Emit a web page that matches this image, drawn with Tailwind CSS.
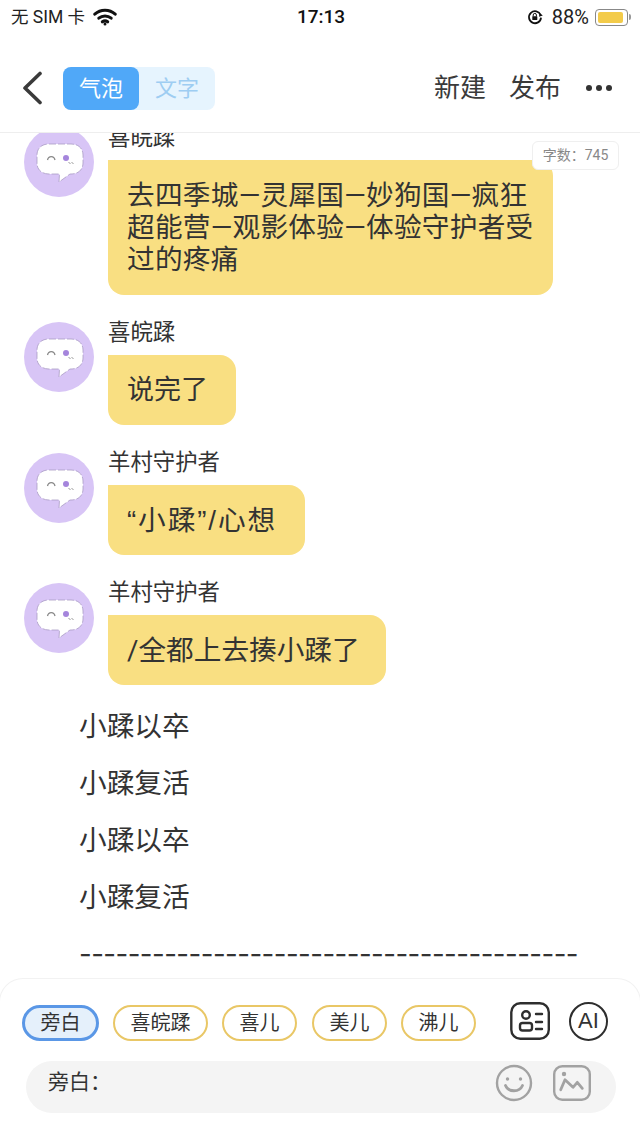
<!DOCTYPE html>
<html lang="zh">
<head>
  <meta charset="UTF-8" />
  <meta name="viewport" content="width=device-width, initial-scale=1.0" />
  <title>气泡</title>
  <script src="https://cdn.jsdelivr.net/npm/@tailwindcss/browser@4"></script>
</head>
<body class="bg-white text-[#333] font-['Roboto','Noto_Sans_CJK_SC',sans-serif]">
  <div class="relative w-[640px] h-[1138px] flex flex-col overflow-hidden">
    <!-- Status bar -->
    <div class="h-[44px] shrink-0 flex items-start justify-between pl-[11px] pr-[9px] pt-[4px] text-[#222]">
      <div class="flex items-center gap-[8px] w-[200px] h-[26px]">
        <span class="text-[17.500px] leading-[26px]">无 SIM 卡</span>
        <svg width="24" height="18" viewBox="0 0 24 18" fill="none" stroke="#111" stroke-width="3" stroke-linecap="round"><path d="M1.800 6.200C7.500 1 16.500 1 22.200 6.200"/><path d="M5.800 10.200C9.300 7.200 14.700 7.200 18.200 10.200"/><path d="M9.300 13.800c1.700-1.200 3.700-1.200 5.400 0"/><circle cx="12" cy="16" r="1.500" fill="#111" stroke="none"/></svg>
      </div>
      <div class="text-[19px] leading-[26px] font-medium text-[#111]">17:13</div>
      <div class="flex items-center justify-end gap-[9px] w-[200px] h-[26px]">
        <svg width="16" height="16" viewBox="0 0 16 16" fill="none"><path d="M13.600 6A6 6 0 1 0 14 8.600" stroke="#111" stroke-width="1.800"/><path d="M15.800 6.500 12 7.800 12.600 4z" fill="#111"/><rect x="5.300" y="7.200" width="5" height="3.800" rx=".6" fill="#111"/><path d="M6.200 7.500V6a1.600 1.600 0 0 1 3.200 0v1.500" stroke="#111" stroke-width="1"/></svg>
        <span class="text-[20px] leading-[26px] text-[#222]">88%</span>
        <div class="flex items-center gap-[1px] -ml-[3px]">
          <div class="w-[33px] h-[17px] rounded-[4px] border border-[#888] p-[2px]"><div class="w-[25px] h-full rounded-[2px] bg-[#f3cb4a]"></div></div>
          <div class="w-[2px] h-[6px] rounded-r-full bg-[#999]"></div>
        </div>
      </div>
    </div>

    <!-- Nav -->
    <header class="h-[89px] shrink-0 flex items-center border-b border-[#eeeeee] pl-[22px] pr-[28px]">
      <svg width="20" height="34" viewBox="0 0 20 34" fill="none" stroke="#3a3a3a" stroke-width="3.600" stroke-linecap="round" stroke-linejoin="round"><path d="M18 2.500 3 17l15 14.500"/></svg>
      <div class="ml-[21px] flex w-[152px] h-[43px] rounded-[8px] bg-[#e6f4fe] text-[22px] leading-[43px] text-center">
        <div class="w-[76px] rounded-[8px] bg-[#50a8f8] text-white">气泡</div>
        <div class="flex-1 text-[#9ecdf2]">文字</div>
      </div>
      <div class="ml-auto flex items-center text-[26px] text-[#3a3a3a]">
        <span>新建</span>
        <span class="ml-[23px]">发布</span>
        <div class="ml-[25px] flex gap-[4px]">
          <i class="block size-[6px] rounded-full bg-[#333]"></i>
          <i class="block size-[6px] rounded-full bg-[#333]"></i>
          <i class="block size-[6px] rounded-full bg-[#333]"></i>
        </div>
      </div>
    </header>

    <!-- Word count -->
    <div class="absolute top-[141px] left-[532px] w-[87px] h-[29px] z-10 bg-white border border-[#efefef] rounded-[6px] text-[14px] leading-[27px] text-center text-[#888]">字数：745</div>

    <!-- Conversation -->
    <main class="flex-1 overflow-hidden">
      <div class="-mt-[6px] flex flex-col gap-[27px] pl-[24px]">
        <div class="flex gap-[14px]">
          <svg class="shrink-0" width="70" height="70" viewBox="0 0 70 70"><circle cx="35" cy="35" r="35" fill="#d8c5f6"/><path d="M25 17h22c8 0 12 5 12 11v8c0 6-4 11-12 11h-1l-11 8 .5-8H25c-8 0-12-5-12-11v-8c0-6 4-11 12-11z" fill="#fff" stroke="#a99cc4" stroke-width=".8" stroke-dasharray="7 2"/><path d="M23.500 33c1-4.500 6.500-4.500 7.500 0" fill="none" stroke="#888" stroke-width="1.300"/><circle cx="42" cy="31" r="3" fill="#a585dc"/><path d="M44.500 35l2 2M47.500 35l2 2" stroke="#999" stroke-width="1"/></svg>
          <div>
            <div class="h-[33px] text-[22.400px] leading-[20px]">喜皖蹂</div>
            <div class="w-[445px] bg-[#f9df82] rounded-[16px] rounded-tl-none pl-[19px] pr-[12px] pt-[20px] pb-[19px] text-[27.670px] leading-[32px] tracking-[.25px]">去四季城—灵犀国—妙狗国—疯狂超能营—观影体验—体验守护者受过的疼痛</div>
          </div>
        </div>
        <div class="flex gap-[14px]">
          <svg class="shrink-0" width="70" height="70" viewBox="0 0 70 70"><circle cx="35" cy="35" r="35" fill="#d8c5f6"/><path d="M25 17h22c8 0 12 5 12 11v8c0 6-4 11-12 11h-1l-11 8 .5-8H25c-8 0-12-5-12-11v-8c0-6 4-11 12-11z" fill="#fff" stroke="#a99cc4" stroke-width=".8" stroke-dasharray="7 2"/><path d="M23.500 33c1-4.500 6.500-4.500 7.500 0" fill="none" stroke="#888" stroke-width="1.300"/><circle cx="42" cy="31" r="3" fill="#a585dc"/><path d="M44.500 35l2 2M47.500 35l2 2" stroke="#999" stroke-width="1"/></svg>
          <div>
            <div class="h-[33px] text-[22.400px] leading-[20px]">喜皖蹂</div>
            <div class="w-[128px] h-[70px] bg-[#f9df82] rounded-[16px] rounded-tl-none pl-[19px] text-[27px] leading-[70px]">说完了</div>
          </div>
        </div>
        <div class="flex gap-[14px] mt-[1px]">
          <svg class="shrink-0" width="70" height="70" viewBox="0 0 70 70"><circle cx="35" cy="35" r="35" fill="#d8c5f6"/><path d="M25 17h22c8 0 12 5 12 11v8c0 6-4 11-12 11h-1l-11 8 .5-8H25c-8 0-12-5-12-11v-8c0-6 4-11 12-11z" fill="#fff" stroke="#a99cc4" stroke-width=".8" stroke-dasharray="7 2"/><path d="M23.500 33c1-4.500 6.500-4.500 7.500 0" fill="none" stroke="#888" stroke-width="1.300"/><circle cx="42" cy="31" r="3" fill="#a585dc"/><path d="M44.500 35l2 2M47.500 35l2 2" stroke="#999" stroke-width="1"/></svg>
          <div>
            <div class="h-[32px] text-[22.400px] leading-[18px]">羊村守护者</div>
            <div class="w-[197px] h-[70px] bg-[#f9df82] rounded-[16px] rounded-tl-none pl-[19px] text-[27.670px] leading-[71px] tracking-[1.900px] font-['Liberation_Sans','Noto_Sans_CJK_SC',sans-serif]">“小蹂”/心想</div>
          </div>
        </div>
        <div class="flex gap-[14px] mt-[1px]">
          <svg class="shrink-0" width="70" height="70" viewBox="0 0 70 70"><circle cx="35" cy="35" r="35" fill="#d8c5f6"/><path d="M25 17h22c8 0 12 5 12 11v8c0 6-4 11-12 11h-1l-11 8 .5-8H25c-8 0-12-5-12-11v-8c0-6 4-11 12-11z" fill="#fff" stroke="#a99cc4" stroke-width=".8" stroke-dasharray="7 2"/><path d="M23.500 33c1-4.500 6.500-4.500 7.500 0" fill="none" stroke="#888" stroke-width="1.300"/><circle cx="42" cy="31" r="3" fill="#a585dc"/><path d="M44.500 35l2 2M47.500 35l2 2" stroke="#999" stroke-width="1"/></svg>
          <div>
            <div class="h-[32px] text-[22.400px] leading-[18px]">羊村守护者</div>
            <div class="w-[278px] h-[70px] bg-[#f9df82] rounded-[16px] rounded-tl-none pl-[19px] text-[27.670px] leading-[71px]">/全都上去揍小蹂了</div>
          </div>
        </div>
      </div>
      <div class="mt-[13px] pl-[79px] text-[27.670px] leading-[57px]">
        <p>小蹂以卒</p>
        <p>小蹂复活</p>
        <p>小蹂以卒</p>
        <p>小蹂复活</p>
        <p class="whitespace-nowrap font-['Inter',sans-serif] tracking-[-.55px]">-----------------------------------------</p>
      </div>
    </main>

    <!-- Compose panel -->
    <footer class="h-[160px] shrink-0 bg-white rounded-t-[24px] border border-b-0 border-[#f2f2f2] -mx-px">
      <div class="flex items-center pl-[22px] pt-[26px] text-[20px]">
        <div class="w-[77px] h-[36px] text-center rounded-full border-[3px] border-[#5a97e6] bg-[#e5f0fb] leading-[30px]">旁白</div>
        <div class="ml-[14px] w-[95px] h-[36px] text-center rounded-full border-2 border-[#e9c766] leading-[32px]">喜皖蹂</div>
        <div class="ml-[14px] w-[75px] h-[36px] text-center rounded-full border-2 border-[#e9c766] leading-[32px]">喜儿</div>
        <div class="ml-[15px] w-[75px] h-[36px] text-center rounded-full border-2 border-[#e9c766] leading-[32px]">美儿</div>
        <div class="ml-[14px] w-[75px] h-[36px] text-center rounded-full border-2 border-[#e9c766] leading-[32px]">沸儿</div>
        <svg class="ml-[34px] -mt-[4px]" width="40" height="38" viewBox="0 0 40 38" fill="none" stroke="#2e2e2e" stroke-width="2.400"><rect x="1.300" y="1.200" width="37.500" height="35.500" rx="9"/><circle cx="16" cy="13" r="3.800"/><rect x="10" y="21" width="12" height="7.500" rx="2.500"/><path d="M26 12h6M26 20h6M26 27h6" stroke-linecap="round"/></svg>
        <div class="ml-[19px] -mt-[4px] size-[39px] rounded-full border-[2.400px] border-[#2e2e2e] flex items-center justify-center text-[22px] leading-none font-['Liberation_Sans',sans-serif]">AI</div>
      </div>
      <div class="ml-[26px] w-[590px] mt-[20px] h-[52px] rounded-full bg-[#f4f4f4] flex items-center pl-[22px] pr-[25px]">
        <span class="text-[21px] -mt-[9px]">旁白：</span>
        <svg class="ml-auto -mt-[8px]" width="38" height="38" viewBox="0 0 38 38" fill="none" stroke="#a2a2a2" stroke-width="2.400"><circle cx="19" cy="19" r="17"/><path d="M10.500 21.500c3 7 14 7 17 0" stroke-linecap="round" stroke-width="2.800"/><circle cx="12.500" cy="15" r="1.700" fill="#a2a2a2" stroke="none"/><circle cx="25.500" cy="15" r="1.700" fill="#a2a2a2" stroke="none"/></svg>
        <svg class="ml-[20px] -mt-[8px]" width="38" height="36" viewBox="0 0 38 36" fill="none" stroke="#a2a2a2" stroke-width="2.400"><rect x="1.200" y="1.200" width="35.600" height="33.600" rx="8"/><circle cx="11" cy="9" r="2.200" fill="#a2a2a2" stroke="none"/><path d="M7.700 24.700 12 14.700 20 22.300l4.300-5 5 6" stroke-linejoin="round" stroke-linecap="round" stroke-width="2.800"/></svg>
      </div>
    </footer>
  </div>
</body>
</html>
